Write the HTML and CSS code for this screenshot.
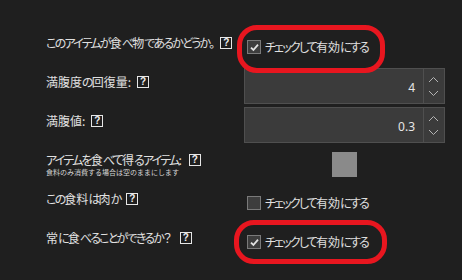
FILE: index.html
```html
<!DOCTYPE html>
<html lang="ja">
<head>
<meta charset="utf-8">
<link rel="stylesheet" href="styles.css">
</head>
<body>
<div class="form">
  <div class="label"><span><span class="k">このアイテムが</span>食<span class="k">べ</span>物<span class="k">であるかどうか。</span></span><span class="help">?</span></div>
  <div class="control"><div class="check"><span class="box"><svg width="11" height="11" viewBox="0 0 11 11"><path d="M2 5.6 L4.4 8 L9 2.6" fill="none" stroke="#e2e2e2" stroke-width="1.8"/></svg></span><span><span class="k">チェックして</span>有効<span class="k">にする</span></span></div></div>

  <div class="label"><span>満腹度<span class="k">の</span>回復量:</span><span class="help tight">?</span></div>
  <div class="control"><div class="num"><span class="value">4</span><span class="spin"><svg width="20" height="34" viewBox="0 0 20 34"><path d="M5 13 L9.5 8.5 L14 13 M5 22 L9.5 26.5 L14 22" fill="none" stroke="#b4b4b4" stroke-width="1"/></svg></span></div></div>

  <div class="label"><span>満腹値:</span><span class="help tight">?</span></div>
  <div class="control"><div class="num"><span class="value">0.3</span><span class="spin"><svg width="20" height="34" viewBox="0 0 20 34"><path d="M5 13 L9.5 8.5 L14 13 M5 22 L9.5 26.5 L14 22" fill="none" stroke="#b4b4b4" stroke-width="1"/></svg></span></div></div>

  <div class="label stack">
    <div class="line"><span><span class="k">アイテムを</span>食<span class="k">べて</span>得<span class="k">るアイテム</span>:</span><span class="help">?</span></div>
    <div class="sub">食料のみ消費する場合は空のままにします</div>
  </div>
  <div class="control center"><div class="slot"></div></div>

  <div class="label"><span><span class="k">この</span>食料<span class="k">は</span>肉<span class="k">か</span></span><span class="help mid">?</span></div>
  <div class="control"><div class="check"><span class="box"></span><span><span class="k">チェックして</span>有効<span class="k">にする</span></span></div></div>

  <div class="label"><span>常<span class="k">に</span>食<span class="k">べることができるか？</span></span><span class="help wide">?</span></div>
  <div class="control"><div class="check"><span class="box"><svg width="11" height="11" viewBox="0 0 11 11"><path d="M2 5.6 L4.4 8 L9 2.6" fill="none" stroke="#e2e2e2" stroke-width="1.8"/></svg></span><span><span class="k">チェックして</span>有効<span class="k">にする</span></span></div></div>
</div>
<div class="mark mark1"></div>
<div class="mark mark2"></div>
</body>
</html>
```
FILE: styles.css
```css
html, body {
  margin: 0;
  padding: 0;
  background: #1f1f1f;
  width: 462px;
  height: 280px;
  overflow: hidden;
}
body {
  position: relative;
  font-family: "Noto Sans CJK JP", "Noto Sans", sans-serif;
  font-size: 12px;
  color: #e0e0e0;
  font-feature-settings: "palt";
}
.k {
  letter-spacing: -1.8px;
}
.form {
  display: grid;
  grid-template-columns: 198px 201px;
  grid-auto-rows: 36px;
  row-gap: 3px;
  padding: 29px 0 0 46px;
}
.label {
  align-self: start;
  display: flex;
  align-items: center;
  padding-top: 6px;
  line-height: 16px;
  white-space: nowrap;
}
.label.stack {
  display: block;
}
.line {
  display: flex;
  align-items: center;
  line-height: 16px;
}
.sub {
  font-size: 7px;
  line-height: 9px;
  font-feature-settings: normal;
  color: #d6d6d6;
}
.help {
  box-sizing: border-box;
  width: 12px;
  height: 12px;
  margin-left: 7px;
  border: 1px solid #e6e6e6;
  font-family: "Liberation Sans", sans-serif;
  font-weight: bold;
  font-size: 10px;
  line-height: 10px;
  text-align: center;
  color: #f0f0f0;
  flex: none;
}
.help.tight {
  margin-left: 6px;
}
.help.mid {
  margin-left: 6px;
}
.help.wide {
  margin-left: 10px;
}
.control {
  align-self: center;
  display: flex;
}
.control.center {
  justify-content: center;
}
.check {
  display: flex;
  align-items: center;
  gap: 4px;
  padding-left: 3px;
  line-height: 16px;
}
.box {
  box-sizing: border-box;
  width: 14px;
  height: 14px;
  border: 1px solid #7a7a7a;
  background: #3d3d3d;
  display: flex;
  align-items: center;
  justify-content: center;
}
.num {
  box-sizing: border-box;
  width: 201px;
  height: 36px;
  display: flex;
  border: 1px solid #4f4f4f;
  background: #3b3b3b;
}
.value {
  flex: 1;
  display: flex;
  align-items: center;
  justify-content: flex-end;
  padding-right: 8px;
  padding-top: 2px;
  font-family: "Noto Sans", sans-serif;
  font-size: 12px;
  color: #e6e6e6;
}
.spin {
  width: 20px;
  border-left: 1px solid #4f4f4f;
  display: flex;
}
.slot {
  width: 25px;
  height: 25px;
  background: #8a8a8a;
}
.mark {
  position: absolute;
  box-sizing: border-box;
  border: 5px solid #e8161f;
  border-radius: 20px;
}
.mark1 {
  left: 237px;
  top: 25px;
  width: 148px;
  height: 48px;
}
.mark2 {
  left: 234px;
  top: 220px;
  width: 153px;
  height: 44px;
}
```
